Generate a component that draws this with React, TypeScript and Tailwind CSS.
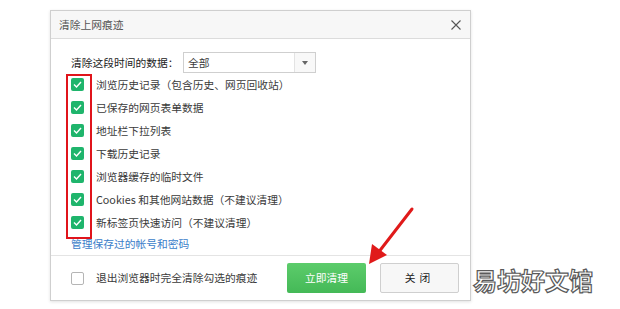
import React from 'react';

const items = [
  '浏览历史记录（包含历史、网页回收站）',
  '已保存的网页表单数据',
  '地址栏下拉列表',
  '下载历史记录',
  '浏览器缓存的临时文件',
  'Cookies 和其他网站数据（不建议清理）',
  '新标签页快速访问（不建议清理）',
];

const CheckBox: React.FC<{ checked?: boolean }> = ({ checked = true }) =>
  checked ? (
    <span className="flex h-[13px] w-[13px] shrink-0 items-center justify-center rounded-[2px] bg-[#1fb56c]">
      <svg width="9" height="7" viewBox="0 0 9 7" fill="none">
        <path d="M1 3.5 L3.5 6 L8 1" stroke="white" strokeWidth="1.4" />
      </svg>
    </span>
  ) : (
    <span className="block h-[13px] w-[13px] shrink-0 rounded-[2px] border border-[#b5b5b5] bg-white" />
  );

export default function App() {
  return (
    <div
      className="relative h-[309px] w-[620px] overflow-hidden bg-white text-[10.75px] leading-[16px] text-[#3a3a3a]"
      style={{ fontFamily: '"Microsoft YaHei", "Noto Sans CJK SC", sans-serif' }}
    >
      <div className="absolute left-[50px] top-[10px] flex h-[291px] w-[421px] flex-col border border-[#cfcfcf] bg-white shadow-[0_1px_3px_rgba(0,0,0,0.12)]">
        {/* title */}
        <div className="flex h-[28px] shrink-0 items-center justify-between border-b border-[#dcdcdc] bg-[#f7f7f7] pl-[8px] pr-[9px]">
          <span className="text-[#555]">清除上网痕迹</span>
          <svg width="10" height="10" viewBox="0 0 10 10">
            <path d="M0.5 0.5 L9.5 9.5 M9.5 0.5 L0.5 9.5" stroke="#555" strokeWidth="1.1" />
          </svg>
        </div>

        {/* body */}
        <div className="flex flex-1 flex-col pl-[20px] pt-[13px]">
          <div className="flex items-center">
            <span className="w-[112px] whitespace-nowrap text-[#222]">清除这段时间的数据：</span>
            <div className="flex h-[21px] w-[133px] items-center border border-[#cfcfcf] bg-white">
              <span className="flex-1 pl-[4px]">全部</span>
              <span className="flex h-full w-[21px] items-center justify-center border-l border-[#e3e3e3] bg-[#f8f8f8]">
                <svg width="6" height="4" viewBox="0 0 6 4">
                  <path d="M0 0 H6 L3 4 Z" fill="#666" />
                </svg>
              </span>
            </div>
          </div>
          <div className="flex flex-col">
            {items.map((t) => (
              <div key={t} className="flex h-[23px] items-center gap-[12px]">
                <CheckBox />
                <span className="whitespace-nowrap">{t}</span>
              </div>
            ))}
          </div>
          <a className="mt-[2px] text-[#3a7dc9]">管理保存过的帐号和密码</a>
        </div>

        {/* footer */}
        <div className="flex h-[45px] shrink-0 items-center border-t border-[#e4e4e4] pl-[20px] pr-[11px]">
          <CheckBox checked={false} />
          <span className="ml-[12px] flex-1">退出浏览器时完全清除勾选的痕迹</span>
          <button className="h-[30px] w-[79px] rounded-[2px] bg-gradient-to-b from-[#5ccc6b] to-[#44b957] text-white">立即清理</button>
          <button className="ml-[14px] h-[30px] w-[79px] rounded-[2px] border border-[#cfcfcf] bg-[#f7f7f7] tracking-[4px] text-[#222]">
            关闭
          </button>
        </div>
      </div>

      {/* red highlight */}
      <div className="absolute left-[66px] top-[74px] h-[165px] w-[26px] border-[2.5px] border-[#e0141b]" />

      {/* arrow */}
      <svg className="absolute left-0 top-0" width="620" height="309" viewBox="0 0 620 309">
        <path d="M412 209 L378 253" stroke="#e01a1a" strokeWidth="3" strokeLinecap="round" />
        <path d="M369 264 L372 244 L387 255 Z" fill="#e01a1a" />
      </svg>

      {/* watermark */}
      <span
        className="absolute left-[473px] top-[264px] text-[24px] font-bold leading-[32px] text-white [-webkit-text-stroke:1.2px_#5a5a5a]"
        style={{ fontFamily: '"Noto Sans CJK SC", sans-serif' }}
      >
        易坊好文馆
      </span>
    </div>
  );
}
